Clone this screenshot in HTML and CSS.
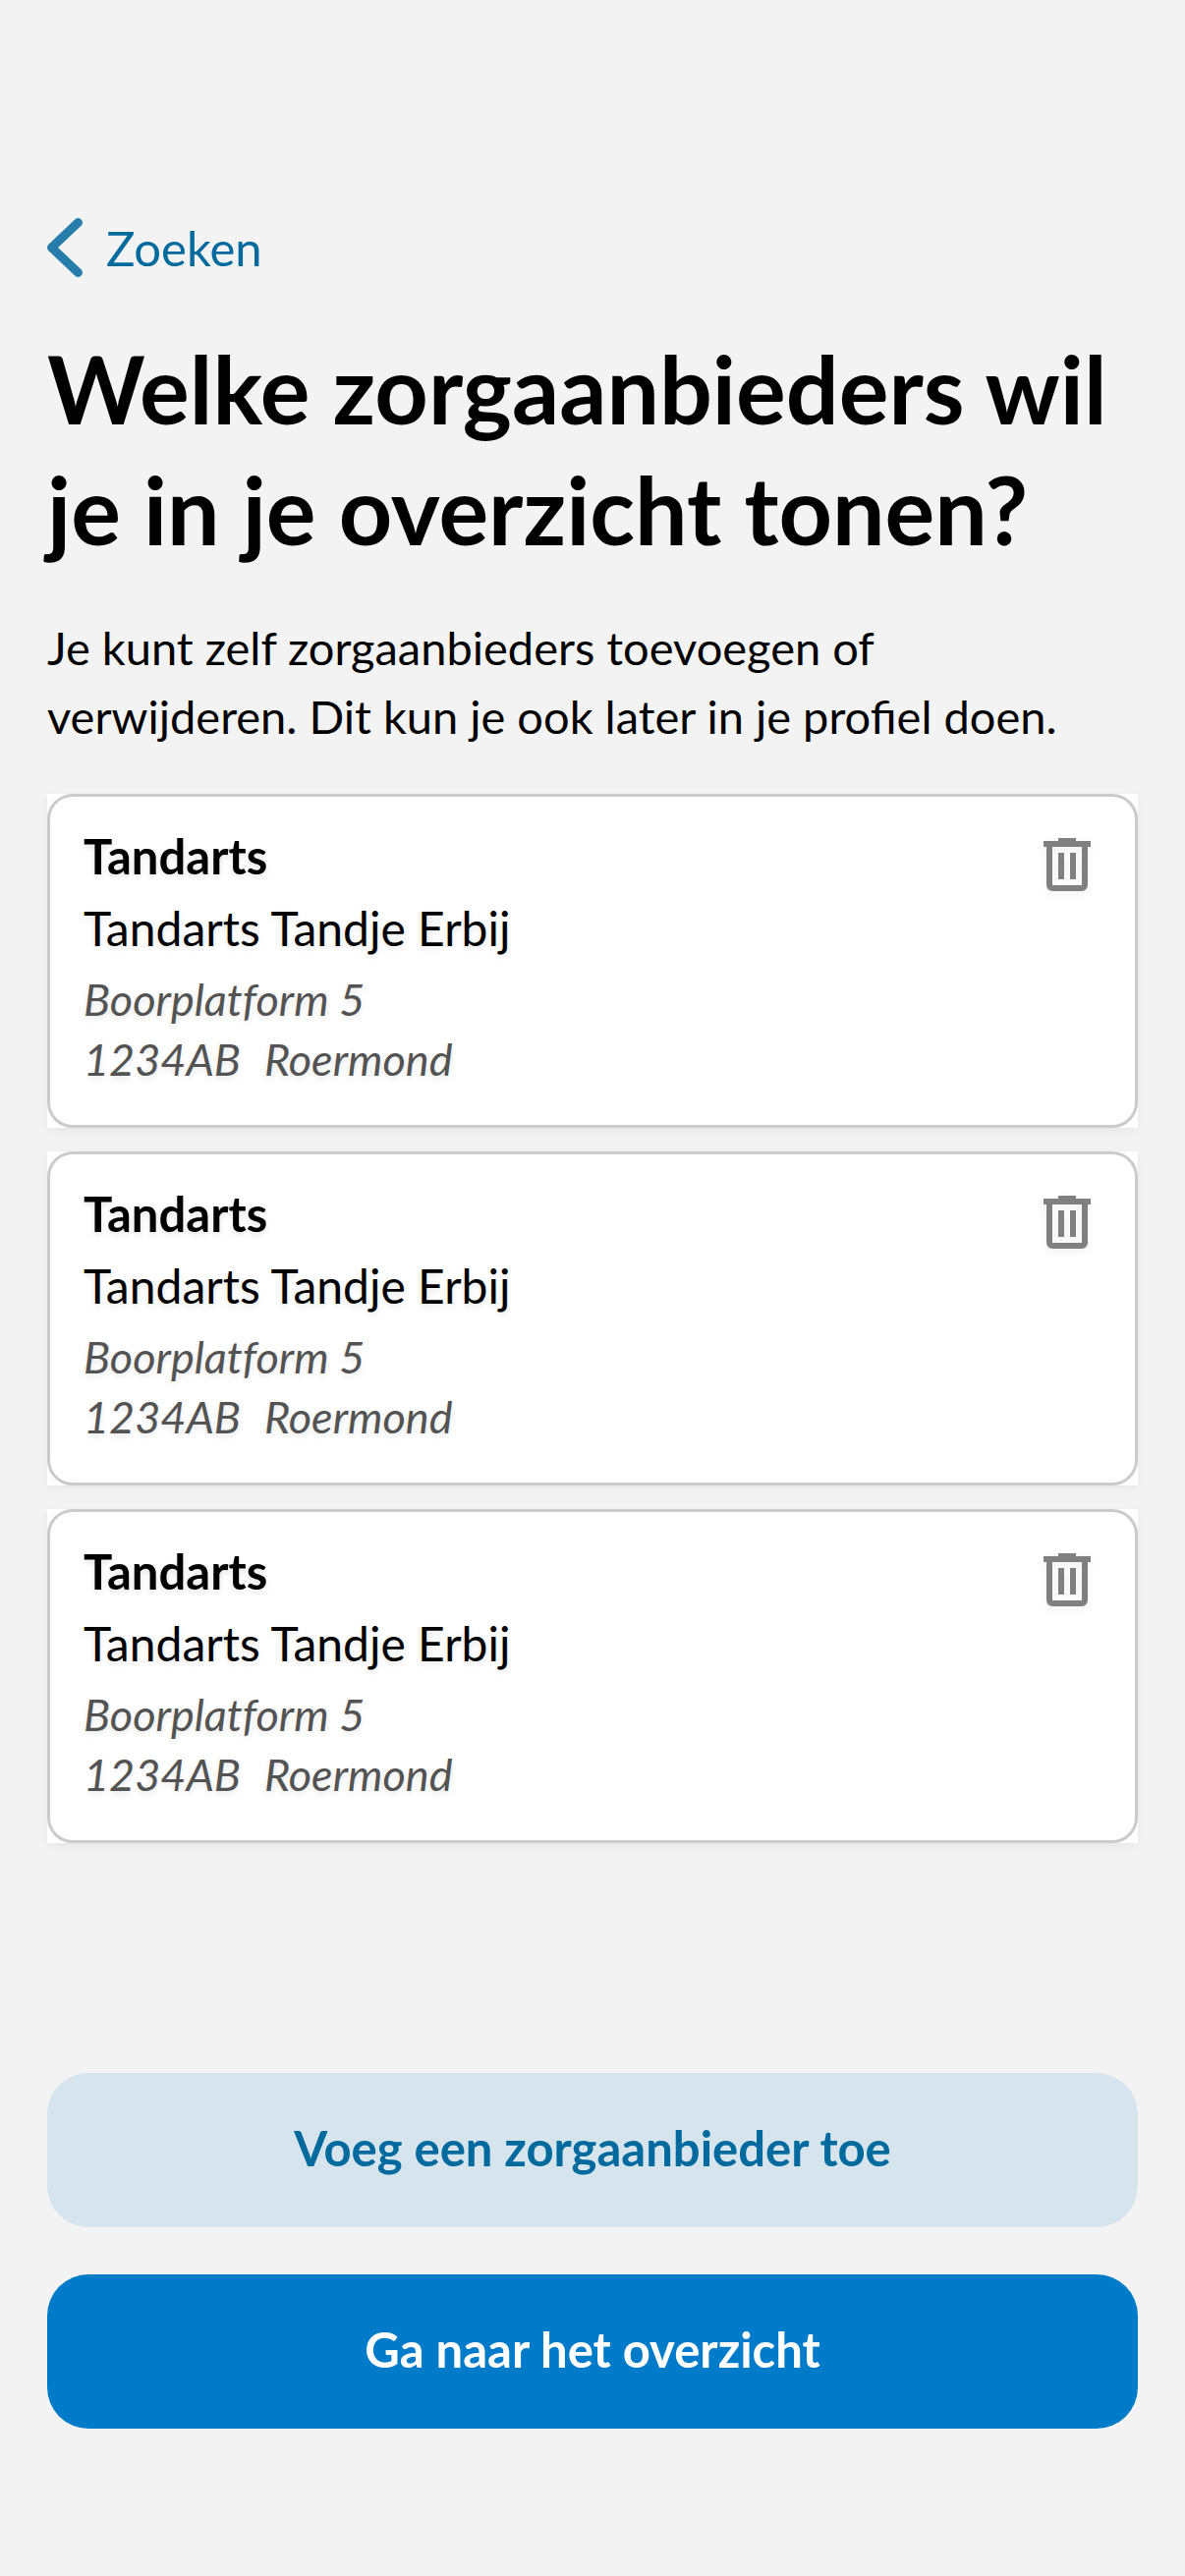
FILE: index.html
```html
<!DOCTYPE html>
<html lang="nl">
<head>
  <meta charset="utf-8">
  <meta name="viewport" content="width=device-width, initial-scale=1">
  <title>Zorgaanbieders</title>
  <link rel="stylesheet" href="styles.css">
</head>
<body>
  <svg class="sprite">
    <symbol id="icon-trash" viewBox="0 0 48 54">
      <path fill="currentColor" fill-rule="evenodd" d="M15 0H33V3H48V9H45V48A6 6 0 0 1 39 54H9A6 6 0 0 1 3 48V9H0V3H15ZM9 9V48H39V9ZM15 15H21V42H15ZM27 15H33V42H27Z"/>
    </symbol>
  </svg>
  <div class="page">
    <nav>
      <a class="back" href="#zoeken">
        <svg class="back-icon" viewBox="0 0 36 60" aria-hidden="true">
          <path d="M31.500 4.500L4.500 30L31.500 55.500" fill="none" stroke="currentColor" stroke-width="9" stroke-linecap="round" stroke-linejoin="round"/>
        </svg>
        Zoeken
      </a>
    </nav>
    <main class="content">
      <h1 class="title">Welke zorgaanbieders wil je in je overzicht tonen?</h1>
      <p class="intro">Je kunt zelf zorgaanbieders toevoegen of verwijderen. Dit kun je ook later in je profiel doen.</p>
      <ul class="providers">
        <li class="provider">
          <article class="card">
            <div class="details">
              <h2 class="kind">Tandarts</h2>
              <p class="name">Tandarts Tandje Erbij</p>
              <address class="address">
                <div>Boorplatform 5</div>
                <div class="city"><span>1234AB</span><span>Roermond</span></div>
              </address>
            </div>
            <button class="remove" type="button" aria-label="Verwijder Tandarts Tandje Erbij"><svg class="remove-icon"><use href="#icon-trash"/></svg></button>
          </article>
        </li>
        <li class="provider">
          <article class="card">
            <div class="details">
              <h2 class="kind">Tandarts</h2>
              <p class="name">Tandarts Tandje Erbij</p>
              <address class="address">
                <div>Boorplatform 5</div>
                <div class="city"><span>1234AB</span><span>Roermond</span></div>
              </address>
            </div>
            <button class="remove" type="button" aria-label="Verwijder Tandarts Tandje Erbij"><svg class="remove-icon"><use href="#icon-trash"/></svg></button>
          </article>
        </li>
        <li class="provider">
          <article class="card">
            <div class="details">
              <h2 class="kind">Tandarts</h2>
              <p class="name">Tandarts Tandje Erbij</p>
              <address class="address">
                <div>Boorplatform 5</div>
                <div class="city"><span>1234AB</span><span>Roermond</span></div>
              </address>
            </div>
            <button class="remove" type="button" aria-label="Verwijder Tandarts Tandje Erbij"><svg class="remove-icon"><use href="#icon-trash"/></svg></button>
          </article>
        </li>
      </ul>
    </main>
    <div class="actions">
      <button class="button button-secondary" type="button">Voeg een zorgaanbieder toe</button>
      <button class="button button-primary" type="button">Ga naar het overzicht</button>
    </div>
  </div>
</body>
</html>
```
FILE: styles.css
```css
*,
*::before,
*::after {
  box-sizing: border-box;
}

body {
  margin: 0;
  background: #f3f3f3;
  color: #000;
  font-family: Lato, "Open Sans", sans-serif;
  font-size: 48px;
  line-height: 61px;
}

h1,
h2,
p,
ul {
  margin: 0;
  padding: 0;
}

button {
  border: 0;
  font: inherit;
  cursor: pointer;
}

.sprite {
  display: none;
}

.page {
  display: flex;
  flex-direction: column;
  min-height: 100vh;
  padding: 222px 48px 150px;
}

.back {
  display: inline-flex;
  align-items: center;
  gap: 24px;
  color: #006a9f;
  font-size: 49px;
  line-height: 60px;
  text-decoration: none;
}

.back-icon {
  width: 36px;
  height: 60px;
  color: #267cab;
}

nav {
  display: flex;
}

.content {
  padding: 52px 0 48px;
}

.title {
  font-size: 95px;
  font-weight: 700;
  line-height: 123px;
}

.intro {
  margin: 44px 0;
  padding-right: 24px;
  font-size: 47px;
  line-height: 70px;
}

.providers {
  display: flex;
  flex-direction: column;
  gap: 24px;
  list-style: none;
}

.provider {
  background: #fff;
  box-shadow: 0 3px 9px rgba(0, 0, 0, 0.05);
}

.card {
  display: flex;
  align-items: flex-start;
  justify-content: space-between;
  padding: 30px 36px 36px 34px;
  border: 3px solid #cbcbcb;
  border-radius: 26px;
  text-shadow: 0 3px 6px rgba(0, 0, 0, 0.1);
}

.details {
  display: flex;
  flex-direction: column;
  gap: 12px;
}

.kind {
  font-size: 49px;
  font-weight: 700;
}

.address {
  color: #535353;
  font-size: 45px;
  font-style: italic;
  font-variant-ligatures: none;
}

.city {
  display: flex;
  gap: 24px;
}

.remove {
  padding: 12px 9px;
  background: none;
  color: #808080;
}

.remove-icon {
  display: block;
  width: 48px;
  height: 54px;
  filter: drop-shadow(0 3px 4px rgba(0, 0, 0, 0.06));
}

.actions {
  display: flex;
  flex-direction: column;
  gap: 48px;
  margin-top: auto;
}

.button {
  padding: 46px 48px 50px;
  border-radius: 42px;
  font-size: 49px;
  font-weight: 700;
}

.button-secondary {
  background: #d6e4ed;
  color: #006a9f;
}

.button-primary {
  background: #007bc9;
  color: #fff;
}
```
